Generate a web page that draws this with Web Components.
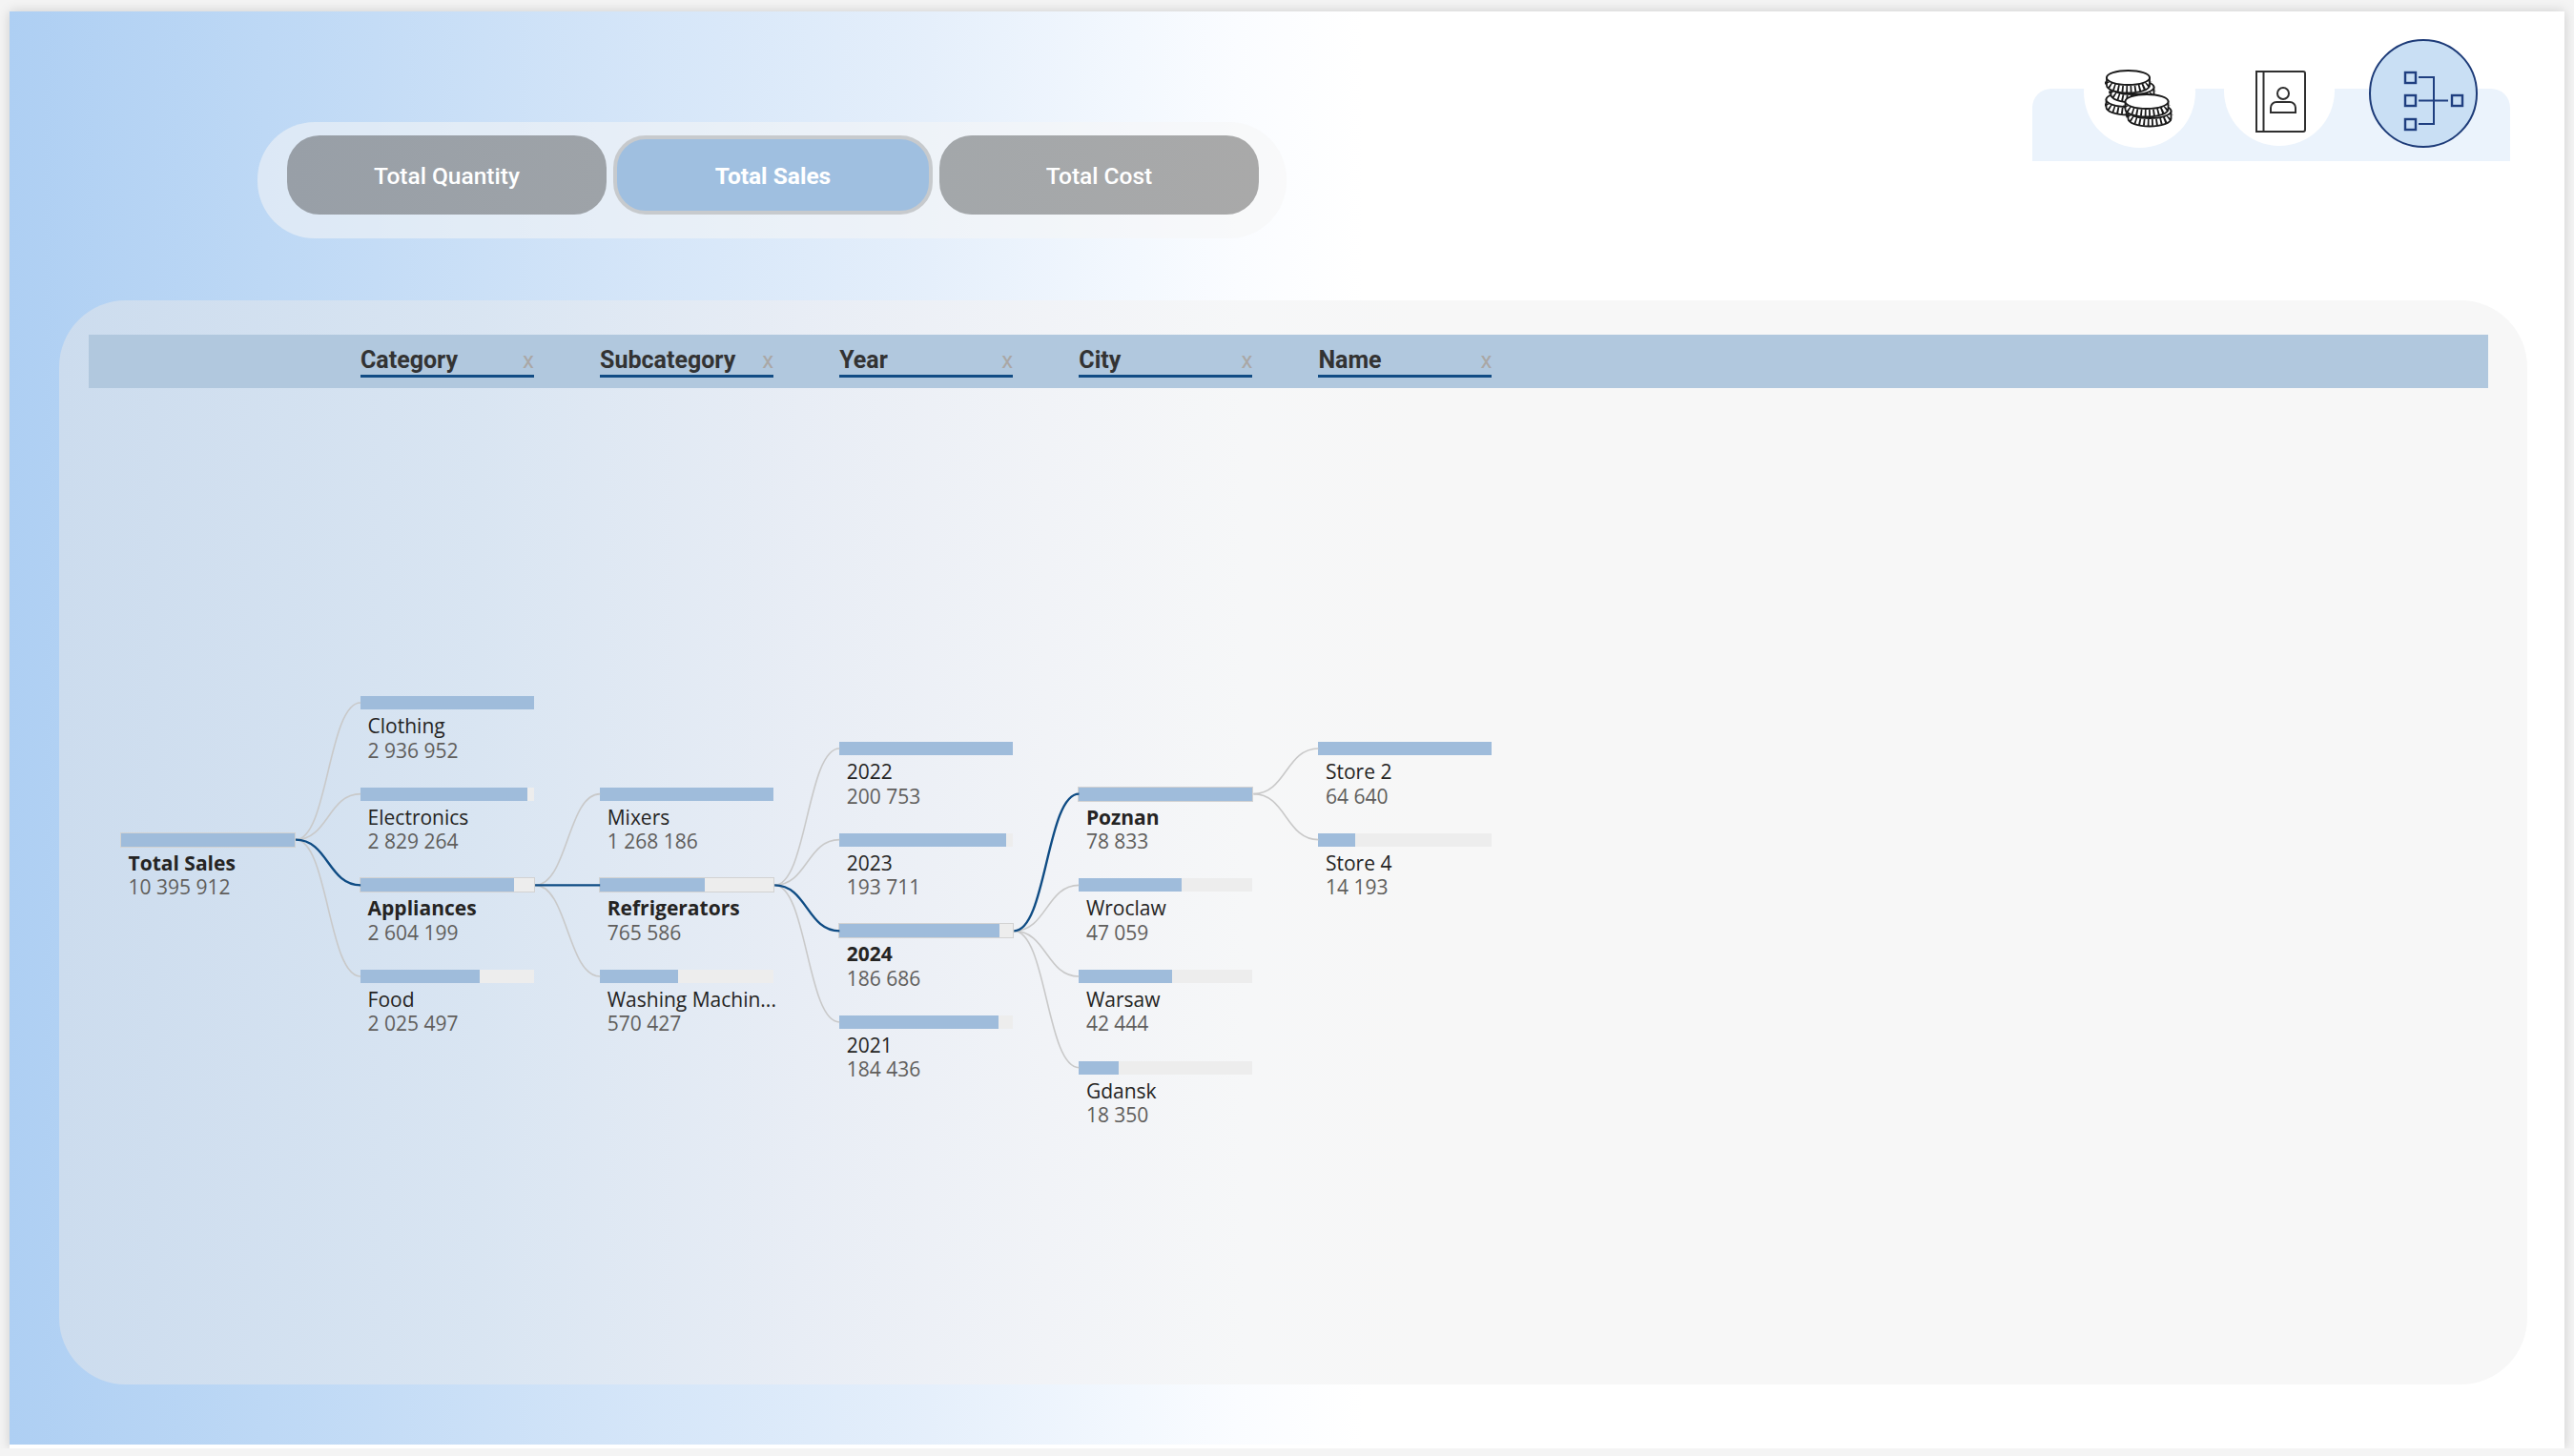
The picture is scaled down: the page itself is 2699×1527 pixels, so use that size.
<!DOCTYPE html>
<html>
<head>
<meta charset="utf-8">
<title>Decomposition tree</title>
<style>
    html,body{margin:0;padding:0;background:#f4f4f4;}
</style>
</head>
<body>
<report-page>
    <tab-strip slot="tabs">
        <tab-button style="--tab:linear-gradient(90deg,#989fa7,#9ea3a8)">Total Quantity</tab-button>
        <tab-button selected style="--tab:#9fbfe0">Total Sales</tab-button>
        <tab-button style="--tab:linear-gradient(90deg,#a3a7aa,#a9a9a9)">Total Cost</tab-button>
    </tab-strip>
    <icon-nav slot="nav"></icon-nav>
    <field-header slot="fields">
        <field-chip>Category</field-chip>
        <field-chip>Subcategory</field-chip>
        <field-chip>Year</field-chip>
        <field-chip>City</field-chip>
        <field-chip>Name</field-chip>
    </field-header>
    <decomp-tree slot="tree"></decomp-tree>
</report-page>

<script>
const HEAD = `"Roboto",sans-serif`;
const TEXT = `"Open Sans","Noto Sans",sans-serif`;

class ReportPage extends HTMLElement {
    constructor(){
        super();
        this.attachShadow({mode:'open'});
    }
    getStyles(){
        return `
        <style>
            :host{
                display:block;
                width:2679px;
                height:1507px;
                margin:12px 0 0 10px;
                background:#fff;
                box-shadow:0 0 12px rgba(0,0,0,.16);
            }
            .bg{
                height:1503px;
                background:linear-gradient(90deg,#aecff3 0%,#bdd8f5 10%,#d2e4f8 23%,#e5effb 36%,#f3f8fe 44%,#fafcff 48%,#fff 53%);
            }
            .top{
                display:flex;
                justify-content:space-between;
                align-items:flex-start;
                height:303px;
                padding:0 57px 0 260px;
                box-sizing:border-box;
            }
            .card{
                width:2588px;
                height:1137px;
                margin-left:52px;
                padding:36px 41px 0 31px;
                box-sizing:border-box;
                border-radius:70px;
                background:linear-gradient(90deg,#ccdcee 0%,#d9e5f2 17%,#e8edf5 30%,#f1f3f7 40%,#f6f7f8 48%,#f7f7f7 55%);
            }
        </style>
        `;
    }
    render(){
        this.shadowRoot.innerHTML = `
        ${this.getStyles()}
        <div class="bg">
            <div class="top">
                <slot name="tabs"></slot>
                <slot name="nav"></slot>
            </div>
            <div class="card">
                <slot name="fields"></slot>
                <slot name="tree"></slot>
            </div>
        </div>
        `;
    }
    connectedCallback(){
        this.render();
    }
}

class TabStrip extends HTMLElement {
    constructor(){
        super();
        this.attachShadow({mode:'open'});
    }
    connectedCallback(){
        this.shadowRoot.innerHTML = `
        <style>
            :host{
                display:flex;
                gap:7px;
                margin-top:116px;
                padding:14px 29px 25px 31px;
                height:83px;
                border-radius:60px;
                background:rgba(245,245,245,.55);
            }
        </style>
        <slot></slot>
        `;
    }
}

class TabButton extends HTMLElement {
    constructor(){
        super();
        this.attachShadow({mode:'open'});
    }
    connectedCallback(){
        this.shadowRoot.innerHTML = `
        <style>
            :host{
                display:flex;
                justify-content:center;
                align-items:center;
                width:335px;
                height:83px;
                padding-top:2px;
                box-sizing:border-box;
                border-radius:34px;
                background:var(--tab);
                color:#fff;
                font:500 24.5px ${HEAD};
            }
            :host([selected]){
                font-weight:700;
                border:4px solid #c7cacd;
            }
        </style>
        <slot></slot>
        `;
    }
}

class IconNav extends HTMLElement {
    constructor(){
        super();
        this.attachShadow({mode:'open'});
    }
    coin(x,y){
        return `
        <g transform="translate(${x} ${y})">
            <path d="M-22.5 0V8A22.5 8 0 0 0 22.5 8V0Z" fill="#fff" stroke="#1a1a1a" stroke-width="1.8"/>
            <path d="M-21.5 4A21.5 8 0 0 0 21.5 4" fill="none" stroke="#1a1a1a" stroke-width="7" stroke-dasharray="1.8 2.6"/>
            <ellipse rx="22.5" ry="7.5" fill="#fff" stroke="#1a1a1a" stroke-width="1.8"/>
        </g>`;
    }
    getStyles(){
        return `
        <style>
            :host{
                display:flex;
                align-items:flex-start;
                width:501px;
                height:76px;
                margin-top:81px;
                border-radius:20px 20px 0 0;
                background:#ebf3fc;
            }
            .slot{
                flex:none;
                border-radius:50%;
                background:#fff;
            }
            .coins{width:117px;height:117px;margin:-55px 0 0 54px;}
            .book{width:116px;height:116px;margin:-56px 0 0 30px;}
            .tree{width:114px;height:114px;margin:-52px 0 0 36px;box-sizing:border-box;border:2.5px solid #1d3b78;background:#c9dff4;}
            svg{display:block;}
            .coins svg{margin:35px 0 0 22px;}
            .book svg{margin:36px 0 0 32px;}
            .tree svg{margin:30.5px 0 0 33.5px;}
        </style>
        `;
    }
    render(){
        this.shadowRoot.innerHTML = `
        ${this.getStyles()}
        <div class="slot coins">
            <svg width="76" height="62" viewBox="0 0 76 62">
                ${this.coin(24,31.5)}
                ${this.coin(29,18.5)}
                ${this.coin(24.5,8.5)}
                ${this.coin(47,43.5)}
                ${this.coin(44,33.5)}
            </svg>
        </div>
        <div class="slot book">
            <svg width="56" height="67" viewBox="0 0 56 67" fill="none" stroke="#2f2f2f" stroke-width="2">
                <path d="M2 2H51a2 2 0 0 1 2 2V63a2 2 0 0 1-2 2H2Z"/>
                <path d="M9.5 2V65"/>
                <circle cx="30" cy="25" r="6"/>
                <path d="M17 45V40a6 6 0 0 1 6-6H37a6 6 0 0 1 6 6V45Z"/>
            </svg>
        </div>
        <div class="slot tree">
            <svg width="64" height="64" viewBox="0 0 64 64" fill="none" stroke="#1f3f80" stroke-width="2.4">
                <rect x="2" y="2" width="11" height="11"/>
                <rect x="2" y="26" width="11" height="11"/>
                <rect x="2" y="51" width="11" height="11"/>
                <rect x="51" y="26" width="11" height="11"/>
                <path d="M16 7H32V56H16M16 31.5H47" stroke-width="2"/>
            </svg>
        </div>
        `;
    }
    connectedCallback(){
        this.render();
    }
}

class FieldHeader extends HTMLElement {
    constructor(){
        super();
        this.attachShadow({mode:'open'});
    }
    connectedCallback(){
        this.shadowRoot.innerHTML = `
        <style>
            :host{
                display:flex;
                gap:69.1px;
                height:56px;
                padding-left:285px;
                background:#b1c8de;
            }
        </style>
        <slot></slot>
        `;
    }
}

class FieldChip extends HTMLElement {
    constructor(){
        super();
        this.attachShadow({mode:'open'});
    }
    connectedCallback(){
        this.shadowRoot.innerHTML = `
        <style>
            :host{
                display:flex;
                justify-content:space-between;
                align-items:flex-end;
                box-sizing:border-box;
                width:182px;
                height:45px;
                border-bottom:3px solid #124c84;
                color:#333;
                font:700 25px/31px ${HEAD};
            }
            span{
                color:#aaa7a5;
                font:400 24px/30px ${HEAD};
            }
        </style>
        <slot></slot><span>x</span>
        `;
    }
}

// fill is the bar width in px, all bars are 182 wide
const TREE = [
    {top:466.67, nodes:[{label:'Total Sales',value:'10 395 912',fill:182,sel:true}]},
    {top:323, nodes:[
        {label:'Clothing',value:'2 936 952',fill:182},
        {label:'Electronics',value:'2 829 264',fill:175},
        {label:'Appliances',value:'2 604 199',fill:161,sel:true},
        {label:'Food',value:'2 025 497',fill:125}]},
    {top:418.67, nodes:[
        {label:'Mixers',value:'1 268 186',fill:182},
        {label:'Refrigerators',value:'765 586',fill:110,sel:true},
        {label:'Washing Machin...',value:'570 427',fill:82}]},
    {top:371, nodes:[
        {label:'2022',value:'200 753',fill:182},
        {label:'2023',value:'193 711',fill:175},
        {label:'2024',value:'186 686',fill:168,sel:true},
        {label:'2021',value:'184 436',fill:167}]},
    {top:418.67, nodes:[
        {label:'Poznan',value:'78 833',fill:182,sel:true},
        {label:'Wroclaw',value:'47 059',fill:108},
        {label:'Warsaw',value:'42 444',fill:98},
        {label:'Gdansk',value:'18 350',fill:42}]},
    {top:371, nodes:[
        {label:'Store 2',value:'64 640',fill:182},
        {label:'Store 4',value:'14 193',fill:39}]}
];
const PITCH = 95.67;
const COL_STEP = 251.1;

class DecompTree extends HTMLElement {
    constructor(){
        super();
        this.attachShadow({mode:'open'});
    }
    getLinks(){
        let grey = '';
        let blue = '';
        TREE.forEach((col,i)=>{
            const next = TREE[i+1];
            if(!next) return;
            const s = col.nodes.findIndex(n=>n.sel);
            const y0 = col.top + s*PITCH + 7;
            const x0 = i*COL_STEP + 182 + 1;
            const x1 = (i+1)*COL_STEP;
            const mid = (x0+x1)/2;
            next.nodes.forEach((n,k)=>{
                const y1 = next.top + k*PITCH + 7;
                const d = `M${x0} ${y0}C${mid} ${y0} ${mid} ${y1} ${x1} ${y1}`;
                if(n.sel) blue += `<path d="${d}"/>`;
                else grey += `<path d="${d}"/>`;
            });
        });
        return `<svg width="1700" height="900" fill="none">
            <g stroke="#c9c9c9" stroke-width="1.6">${grey}</g>
            <g stroke="#0f4c84" stroke-width="2.4">${blue}</g>
        </svg>`;
    }
    getStyles(){
        return `
        <style>
            :host{
                display:block;
                position:relative;
                height:700px;
                padding-left:34px;
            }
            .cols{
                display:flex;
                gap:69.1px;
            }
            .col{
                width:182px;
                flex:none;
            }
            svg{
                position:absolute;
                left:34px;
                top:0;
            }
        </style>
        `;
    }
    render(){
        const cols = TREE.map(col=>`
            <div class="col" style="margin-top:${col.top}px">
                ${col.nodes.map(n=>`<tree-node label="${n.label}" value="${n.value}" fill="${n.fill}" ${n.sel?'selected':''}></tree-node>`).join('')}
            </div>`).join('');
        this.shadowRoot.innerHTML = `
        ${this.getStyles()}
        ${this.getLinks()}
        <div class="cols">${cols}</div>
        `;
    }
    connectedCallback(){
        this.render();
    }
}

class TreeNode extends HTMLElement {
    constructor(){
        super();
        this.attachShadow({mode:'open'});
        this.label = this.getAttribute('label');
        this.value = this.getAttribute('value');
        this.fill = this.getAttribute('fill');
    }
    getStyles(){
        return `
        <style>
            :host{
                display:block;
                height:95.67px;
                font-family:${TEXT};
            }
            .track{
                height:14px;
                background:#ededed;
            }
            :host([selected]) .track{
                outline:1.5px solid #d2d2d2;
            }
            .bar{
                height:100%;
                background:#9fbcdb;
            }
            .label{
                margin:5px 0 0 7.5px;
                font-size:21px;
                line-height:25.5px;
                color:#252423;
                white-space:nowrap;
            }
            :host([selected]) .label{
                font-weight:700;
            }
            .value{
                margin-left:7.5px;
                font-size:21px;
                line-height:25px;
                color:#605e5c;
                white-space:nowrap;
            }
        </style>
        `;
    }
    render(){
        this.shadowRoot.innerHTML = `
        ${this.getStyles()}
        <div class="track"><div class="bar" style="width:${this.fill}px"></div></div>
        <div class="label">${this.label}</div>
        <div class="value">${this.value}</div>
        `;
    }
    connectedCallback(){
        this.render();
    }
}

customElements.define('report-page', ReportPage);
customElements.define('tab-strip', TabStrip);
customElements.define('tab-button', TabButton);
customElements.define('icon-nav', IconNav);
customElements.define('field-header', FieldHeader);
customElements.define('field-chip', FieldChip);
customElements.define('decomp-tree', DecompTree);
customElements.define('tree-node', TreeNode);
</script>
</body>
</html>
